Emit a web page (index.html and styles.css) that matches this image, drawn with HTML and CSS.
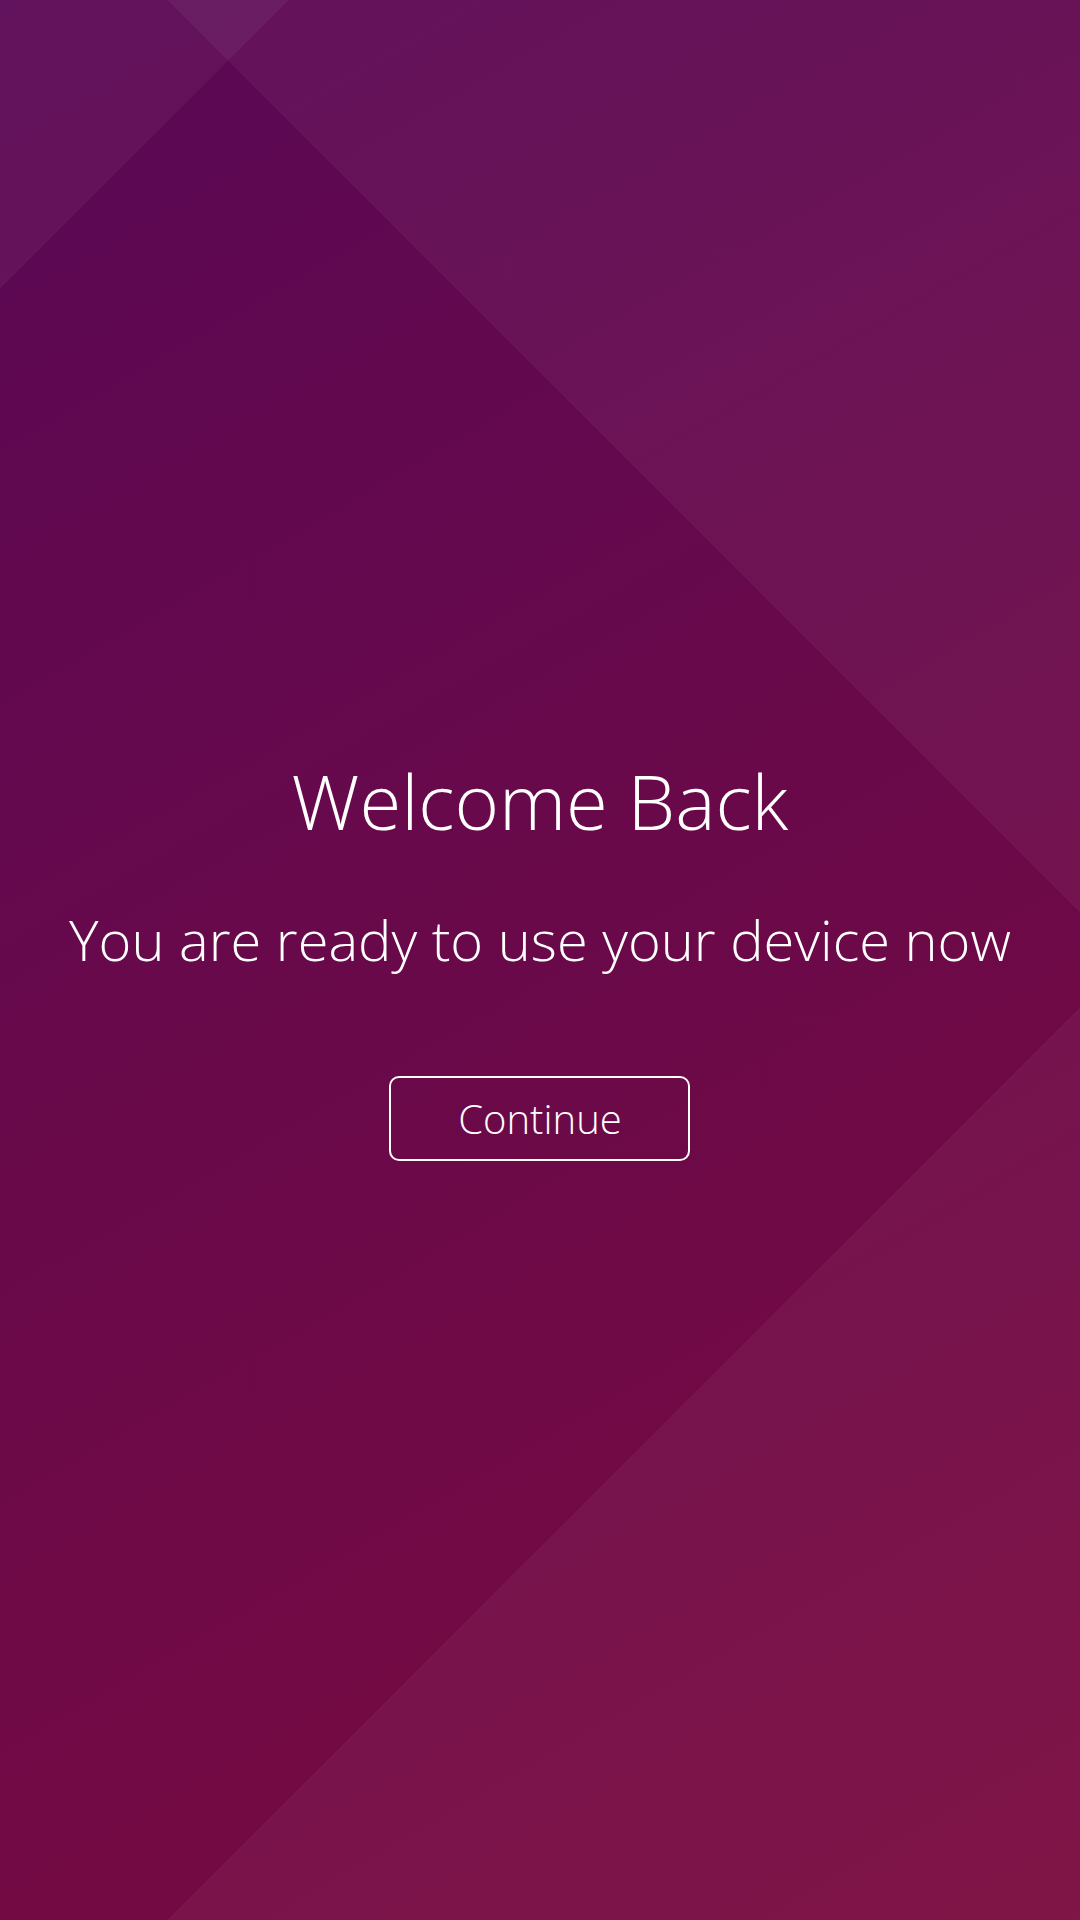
FILE: index.html
```html
<!DOCTYPE html>
<html lang="en">
<head>
    <meta charset="UTF-8">
    <meta name="viewport" content="width=device-width, initial-scale=1.0">
    <title>Welcome Back</title>
    <link rel="stylesheet" href="styles.css">
</head>
<body>
    <div class="screen">
        <div class="welcome">
            <h1 class="welcome-title">Welcome Back</h1>
            <p class="welcome-text">You are ready to use your device now</p>
            <button class="btn-outline">Continue</button>
        </div>
    </div>
</body>
</html>
```

FILE: styles.css
```css
:root {
    --shine: rgba(255, 255, 255, 0.045);
}

* {
    box-sizing: border-box;
    margin: 0;
    padding: 0;
}

body {
    font-family: 'Open Sans', 'Lato', sans-serif;
    font-weight: 300;
    color: #fff;
}

/* Фон с диагональными полосами */
.screen {
    min-height: 100vh;
    padding-bottom: 8px;
    display: flex;
    align-items: center;
    justify-content: center;
    background:
        linear-gradient(135deg, var(--shine) 0 204px, transparent 204px 1476px, var(--shine) 1476px),
        linear-gradient(45deg, transparent 0 1476px, var(--shine) 1476px),
        linear-gradient(150deg, #5a0855 0%, #7a0a3e 100%);
}

.welcome {
    display: flex;
    flex-direction: column;
    align-items: center;
    text-align: center;
}

.welcome-title {
    font-size: 76px;
    font-weight: 300;
    line-height: 100px;
}

.welcome-text {
    font-size: 56px;
    line-height: 70px;
    margin-top: 53px;
}

.btn-outline {
    margin-top: 102px;
    width: 301px;
    height: 85px;
    background: transparent;
    border: 2px solid #fff;
    border-radius: 10px;
    color: #fff;
    font-family: inherit;
    font-weight: 300;
    font-size: 40px;
    cursor: pointer;
}
```
